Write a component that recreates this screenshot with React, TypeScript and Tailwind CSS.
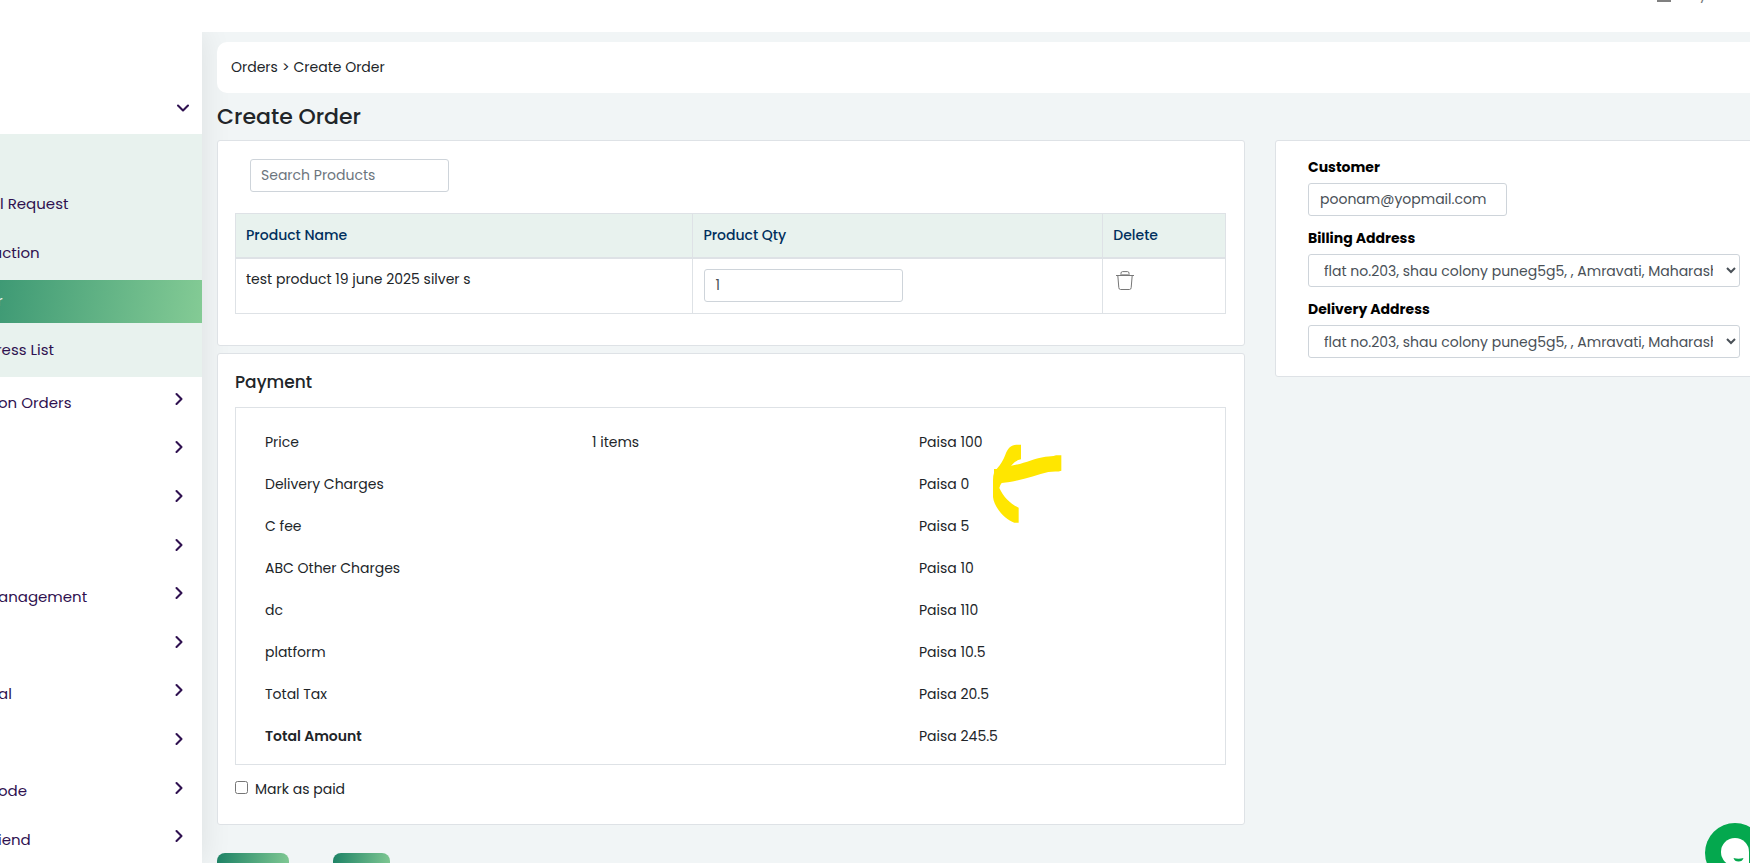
import React, { useState } from 'react';
import { ChevronDown, ChevronRight } from 'lucide-react';

interface MenuItem {
  label: string;
  className: string;
}

interface Charge {
  label: string;
  items?: string;
  amount: string;
  bold?: boolean;
  marked?: boolean;
}

const activeItem = '-ml-[100px] bg-linear-[98deg,#1d8265,#84cb95] pl-[97px] text-white';

const orderMenu: MenuItem[] = [
  { label: '', className: '' },
  { label: 'l Request', className: '' },
  { label: 'action', className: '-ml-2' },
  { label: 'r', className: activeItem },
  { label: 'ress List', className: '-ml-1' },
];

const mainMenu = ['on Orders', '', '', '', 'anagement', '', 'al', '', 'ode', 'iend'];

const charges: Charge[] = [
  { label: 'Price', items: '1 items', amount: 'Paisa 100' },
  { label: 'Delivery Charges', amount: 'Paisa 0', marked: true },
  { label: 'C fee', amount: 'Paisa 5' },
  { label: 'ABC Other Charges', amount: 'Paisa 10' },
  { label: 'dc', amount: 'Paisa 110' },
  { label: 'platform', amount: 'Paisa 10.5' },
  { label: 'Total Tax', amount: 'Paisa 20.5' },
  { label: 'Total Amount', amount: 'Paisa 245.5', bold: true },
];

const address = 'flat no.203, shau colony puneg5g5, , Amravati, Maharashtra, India';

const inputClass =
  'h-[33px] rounded-[3px] border border-[#ced4da] bg-white text-sm text-[#495057] placeholder-[#6c757d] outline-none focus:border-[#2c8c69]';

const TopBar: React.FC = () => (
  <header className="relative z-20 flex h-8 items-start justify-end overflow-hidden bg-white text-sm text-[#777]">
    <span className="h-[2px] w-[14px] bg-[#808080]" />
    <span className="-mt-[16px] ml-[28px] w-[51px] leading-5">yana</span>
  </header>
);

const Sidebar: React.FC = () => (
  <aside className="relative z-10 flex w-[202px] flex-none flex-col bg-white text-[15px] text-[#2f1150] shadow-[0_0_30px_rgba(0,0,0,0.09)]">
    <button aria-label="Toggle orders menu" className="flex h-[102px] justify-end pt-[66px] pr-[9px]">
      <ChevronDown size={20} strokeWidth={2.5} />
    </button>
    <nav className="grid h-[243px] grid-rows-5 overflow-hidden bg-[#e8f2ee]">
      {orderMenu.map((item, i) => (
        <div key={i} className="pb-[5px]">
          <a href="#" className={`flex h-full items-center ${item.className}`}>
            {item.label}
          </a>
        </div>
      ))}
    </nav>
    <nav className="grid flex-1 auto-rows-fr">
      {mainMenu.map((label, i) => (
        <div key={i} className="pb-[5px]">
          <a href="#" className="-ml-[2px] flex h-full items-center justify-between pr-[13px]">
            <span className="pt-[8px]">{label}</span>
            <ChevronRight size={20} strokeWidth={2.5} />
          </a>
        </div>
      ))}
    </nav>
  </aside>
);

const TrashIcon: React.FC = () => (
  <svg width="18" height="19" viewBox="0 0 18 19" fill="none" stroke="#777" strokeWidth="1">
    <path d="M0 4.5h18M5 4.5V2.2Q5 .6 6.5 .6h5Q13 .6 13 2.2v2.3M1.8 4.5l1 12q.1 2 1.7 2h9q1.6 0 1.7-2l1-12" />
    <path d="M5 3.5h8" stroke="#aaa" />
  </svg>
);

const MarkerArrow: React.FC = () => (
  <svg width="73" height="82" viewBox="330 130 219 246" fill="#ffe600">
    <path d="M423 135V179Q403 183 393 198C430 193 462 176 496 171C509 171 518 170 528 167H544V213C534 217 519 214 505 217C462 228 412 246 365 250Q359 257 358 265C370 290 389 312 416 324V369H403C376 361 342 323 339 292V242Q339 227 342 220V208H350C363 193 370 180 376 165C383 145 394 135 409 135Z" />
  </svg>
);

const ProductsCard: React.FC = () => {
  const [search, setSearch] = useState('');
  const [qty, setQty] = useState('1');

  return (
    <section className="h-[206px] rounded-[3px] border border-[#dee2e6] bg-white pt-[18px] pr-[18px] pl-[17px]">
      <input
        type="text"
        aria-label="Search Products"
        placeholder="Search Products"
        className={`${inputClass} ml-[15px] block w-[199px] px-[10px]`}
        value={search}
        onChange={(e) => setSearch(e.target.value)}
      />
      <table className="mt-[21px] w-full table-fixed border-collapse text-left text-sm">
        <colgroup>
          <col className="w-[46.2%]" />
          <col className="w-[41.4%]" />
          <col />
        </colgroup>
        <thead>
          <tr className="h-[44px] bg-[#e8f2ee] text-[#002f5d]">
            <th className="border border-b-2 border-[#dee2e6] px-[10px] font-medium">Product Name</th>
            <th className="border border-b-2 border-[#dee2e6] px-[10px] font-medium">Product Qty</th>
            <th className="border border-b-2 border-[#dee2e6] px-[10px] font-medium">Delete</th>
          </tr>
        </thead>
        <tbody>
          <tr className="align-top">
            <td className="border border-[#dee2e6] p-[10px]">test product 19 june 2025 silver s</td>
            <td className="border border-[#dee2e6] px-[11px] pt-[10px] pb-[11px]">
              <input
                type="text"
                aria-label="Product Qty"
                className={`${inputClass} block w-[199px] px-[10px]`}
                value={qty}
                onChange={(e) => setQty(e.target.value)}
              />
            </td>
            <td className="border border-[#dee2e6] px-[13px] py-[12px]">
              <button aria-label="Delete product" className="block">
                <TrashIcon />
              </button>
            </td>
          </tr>
        </tbody>
      </table>
    </section>
  );
};

const PaymentCard: React.FC = () => {
  const [paid, setPaid] = useState(false);

  return (
    <section className="mt-[7px] rounded-[3px] border border-[#dee2e6] bg-white pt-[16px] pr-[18px] pb-[25px] pl-[17px]">
      <h2 className="text-[17px] leading-6 font-medium">Payment</h2>
      <div className="mt-[13px] border border-[#dee2e6] pt-[13px] pb-[7px] pl-[29px] text-sm">
        {charges.map((charge) => (
          <div key={charge.label} className="grid h-[42px] grid-cols-[327fr_327fr_306fr] items-center">
            <span className={charge.bold ? 'font-semibold' : ''}>{charge.label}</span>
            <span>{charge.items}</span>
            <div className="relative">
              {charge.amount}
              {charge.marked && (
                <div className="absolute -top-[31px] left-[71px]">
                  <MarkerArrow />
                </div>
              )}
            </div>
          </div>
        ))}
      </div>
      <label className="mt-[13px] flex h-[21px] items-center gap-[7px] text-sm">
        <input
          type="checkbox"
          className="mb-[2px] size-[13px]"
          checked={paid}
          onChange={(e) => setPaid(e.target.checked)}
        />
        Mark as paid
      </label>
    </section>
  );
};

const CustomerCard: React.FC = () => (
  <section className="h-[237px] rounded-[3px] border border-[#dee2e6] bg-white pt-[16px] pr-[29px] pl-8 text-sm">
    <label htmlFor="customer" className="block leading-[21px] font-bold text-black">Customer</label>
    <input
      id="customer"
      type="text"
      className={`${inputClass} mt-[5px] block w-[199px] px-[11px]`}
      defaultValue="poonam@yopmail.com"
    />
    <label htmlFor="billing" className="mt-[12px] block leading-[21px] font-bold text-black">Billing Address</label>
    <select id="billing" className={`${inputClass} mt-[5px] block w-full pr-[10px] pl-[11px]`}>
      <option>{address}</option>
    </select>
    <label htmlFor="delivery" className="mt-[12px] block leading-[21px] font-bold text-black">Delivery Address</label>
    <select id="delivery" className={`${inputClass} mt-[5px] block w-full pr-[10px] pl-[11px]`}>
      <option>{address}</option>
    </select>
  </section>
);

const ChatButton: React.FC = () => (
  <button aria-label="Open chat" className="fixed -right-[15px] -bottom-[20px] z-30 size-[60px] rounded-full bg-[#04a84e]">
    <svg width="60" height="60" viewBox="0 0 60 60">
      <path d="M30 15a14 14 0 0 1 14 14v14H30a14 14 0 0 1 0-28z" fill="#fff" />
      <path d="M28.5 35q5 1.5 10 0q-1 3.5-5 3.5t-5-3.5z" fill="#04a84e" />
    </svg>
  </button>
);

export default function App() {
  return (
    <div className="flex h-screen flex-col overflow-hidden bg-[#f1f5f6] font-[Poppins,Inter,sans-serif] text-[#212529]">
      <TopBar />
      <div className="flex min-h-0 flex-1">
        <Sidebar />
        <main className="relative z-20 -mr-5 min-w-0 flex-1 pt-[10px] pl-[15px]">
          <div className="flex h-[51px] items-center rounded-[10px] bg-white px-[14px] pb-[2px] text-sm">
            <a href="#">Orders</a>
            <span className="mx-1">&gt;</span>
            <span>Create Order</span>
          </div>
          <h1 className="mt-[8px] text-[22px] leading-8 font-medium">Create Order</h1>
          <div className="mt-[7px] grid grid-cols-[1028fr_495fr] items-start gap-[30px]">
            <div>
              <ProductsCard />
              <PaymentCard />
              <div className="mt-[28px] flex gap-[44px] text-sm text-white">
                <button aria-label="Create order" className="h-9 w-[72px] rounded-lg bg-linear-[98deg,#1d8265,#84cb95]" />
                <button aria-label="Back" className="h-9 w-[57px] rounded-lg bg-linear-[98deg,#1d8265,#84cb95]" />
              </div>
            </div>
            <CustomerCard />
          </div>
        </main>
      </div>
      <ChatButton />
    </div>
  );
}
